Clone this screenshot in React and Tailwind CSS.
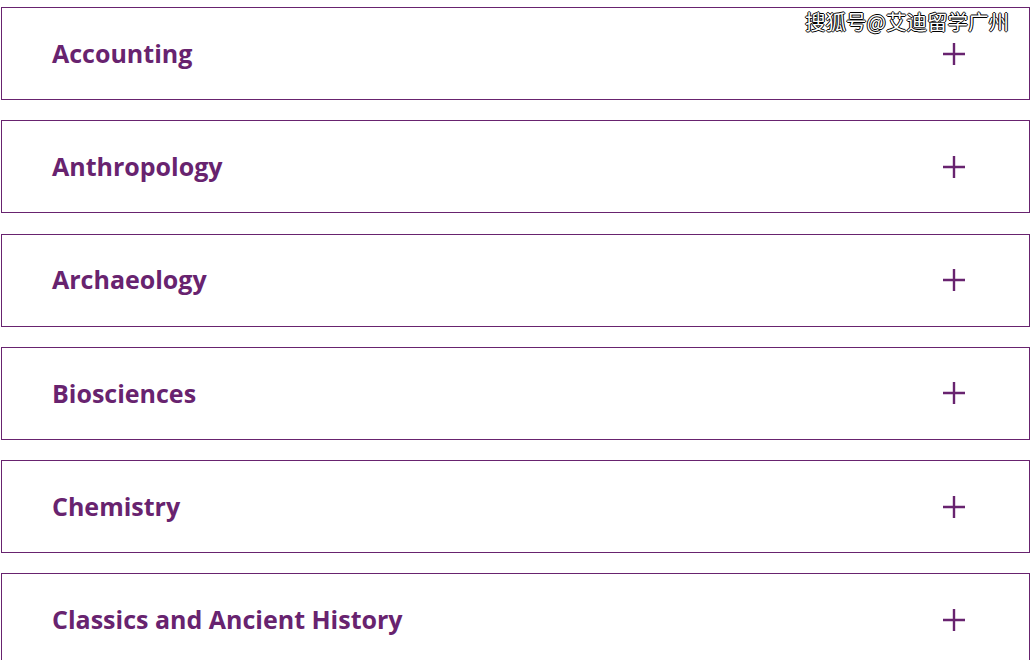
import { useState } from "react";

const subjects = [
  "Accounting",
  "Anthropology",
  "Archaeology",
  "Biosciences",
  "Chemistry",
  "Classics and Ancient History",
];

function PlusIcon() {
  return (
    <svg width="22" height="22" viewBox="0 0 22 22" fill="none">
      <path d="M11 0v22M0 11h22" stroke="#68236f" strokeWidth="2.4" />
    </svg>
  );
}

export default function App() {
  const [open, setOpen] = useState(null);

  return (
    <div className="relative h-[660px] overflow-hidden bg-white pt-[7px] font-['Open_Sans',sans-serif]">
      <div className="flex flex-col gap-[20.25px] ml-px w-[1029px]">
        {subjects.map((name, i) => (
          <button
            key={name}
            onClick={() => setOpen(open === i ? null : i)}
            className="flex h-[93px] shrink-0 items-center justify-between border border-[#68236f] pl-[50px] pr-[64px] text-left"
          >
            <span className="text-[25px] font-bold text-[#68236f]">{name}</span>
            <PlusIcon />
          </button>
        ))}
      </div>

      {/* watermark */}
      <div className="absolute right-[22px] top-[7px] text-[20.5px] leading-[28px] text-white font-['Noto_Sans_CJK_SC',sans-serif] [text-shadow:1px_0_0_#000,-1px_0_0_#000,0_1px_0_#000,0_-1px_0_#000]">
        搜狐号@艾迪留学广州
      </div>
    </div>
  );
}
